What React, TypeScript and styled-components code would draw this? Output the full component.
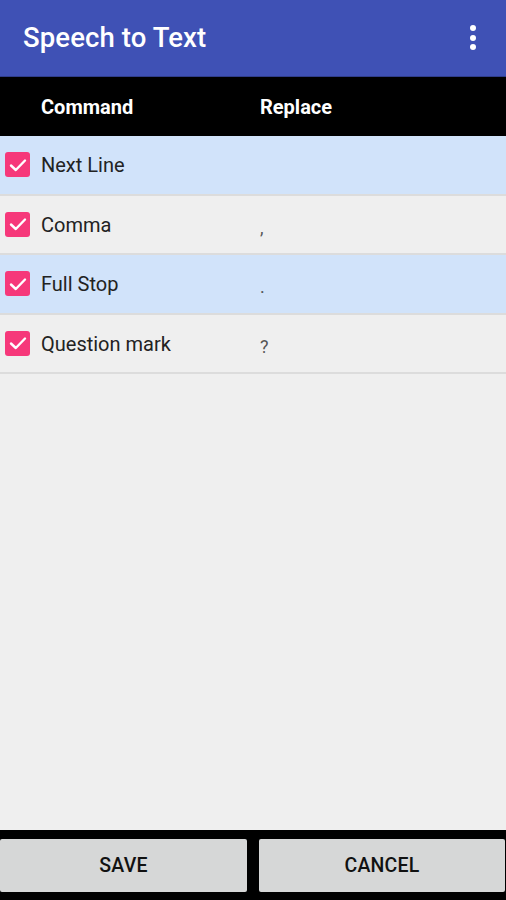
import styled, { createGlobalStyle } from 'styled-components';

const GlobalStyle = createGlobalStyle`
  html, body {
    margin: 0;
    padding: 0;
    height: 100%;
  }
  body {
    font-family: Roboto, "Noto Sans", sans-serif;
    background: #efefef;
  }
  #root {
    height: 100%;
  }
`

const Screen = styled.div`
  width: 506px;
  height: 900px;
  display: flex;
  flex-direction: column;
  background: #efefef;
  overflow: hidden;
`

const AppBar = styled.header`
  height: 76px;
  flex: 0 0 auto;
  background: #3f51b5;
  border-bottom: 1px solid #2f3d8a;
  display: flex;
  align-items: center;
  justify-content: space-between;
  padding: 0 30px 0 23px;
  box-sizing: content-box;
  h1 {
    margin: 0;
    margin-top: -1px;
    color: #fff;
    font-size: 27.5px;
    font-weight: 500;
    letter-spacing: 0.1px;
  }
`

const Kebab = styled.div`
  display: flex;
  flex-direction: column;
  gap: 3.5px;
  margin-top: -1px;
  span {
    width: 6px;
    height: 6px;
    border-radius: 50%;
    background: #fff;
  }
`

const HeaderRow = styled.div`
  height: 59px;
  flex: 0 0 auto;
  background: #000;
  display: grid;
  grid-template-columns: 219px 1fr;
  align-items: center;
  padding-left: 41px;
  color: #fff;
  font-size: 20px;
  font-weight: 700;
  span { margin-top: 1px; }
`

const List = styled.div`
  flex: 1 1 auto;
  display: flex;
  flex-direction: column;
`

const Row = styled.div<{ $shade: boolean }>`
  height: 59.5px;
  flex: 0 0 auto;
  box-sizing: border-box;
  background: ${p => (p.$shade ? '#d1e3fa' : '#efefef')};
  border-bottom: 2px solid #dcdcdc;
  display: grid;
  grid-template-columns: 41px 219px 1fr;
  align-items: center;
  font-size: 20px;
  color: #222;
`

const Check = styled.div`
  width: 25px;
  height: 25px;
  margin-left: 5px;
  border-radius: 3px;
  background: #f6387a;
  display: flex;
  align-items: center;
  justify-content: center;
  svg { display: block; }
`

const Label = styled.span`
  margin-top: 1px;
`

const Value = styled.span`
  color: #555;
  font-size: 18px;
  margin-top: 6px;
`

const BottomBar = styled.div`
  height: 70px;
  flex: 0 0 auto;
  background: #000;
  display: grid;
  grid-template-columns: 247px 246px;
  column-gap: 12px;
  padding-top: 9px;
  box-sizing: border-box;
`

const Button = styled.button`
  height: 53px;
  border: none;
  border-radius: 2px;
  background: #d6d7d7;
  font-family: Roboto, "Noto Sans", sans-serif;
  font-size: 19.5px;
  font-weight: 500;
  color: #111;
  letter-spacing: 0.2px;
  padding: 0;
`

const rows = [
  { cmd: 'Next Line', rep: '' },
  { cmd: 'Comma', rep: ',' },
  { cmd: 'Full Stop', rep: '.' },
  { cmd: 'Question mark', rep: '?' },
]

const CheckMark = () => (
  <svg width="18" height="14" viewBox="0 0 18 14">
    <path d="M2 7.5 L6.8 12 L16 2.5" fill="none" stroke="#fff" strokeWidth="2.4" strokeLinecap="round" strokeLinejoin="round" />
  </svg>
)

export default function App() {
  return (
    <Screen>
      <GlobalStyle />
      <AppBar>
        <h1>Speech to Text</h1>
        <Kebab><span /><span /><span /></Kebab>
      </AppBar>
      <HeaderRow>
        <span>Command</span>
        <span>Replace</span>
      </HeaderRow>
      <List>
        {rows.map((r, i) => (
          <Row key={i} $shade={i % 2 === 0}>
            <Check><CheckMark /></Check>
            <Label>{r.cmd}</Label>
            <Value>{r.rep}</Value>
          </Row>
        ))}
      </List>
      <BottomBar>
        <Button>SAVE</Button>
        <Button>CANCEL</Button>
      </BottomBar>
    </Screen>
  );
}
